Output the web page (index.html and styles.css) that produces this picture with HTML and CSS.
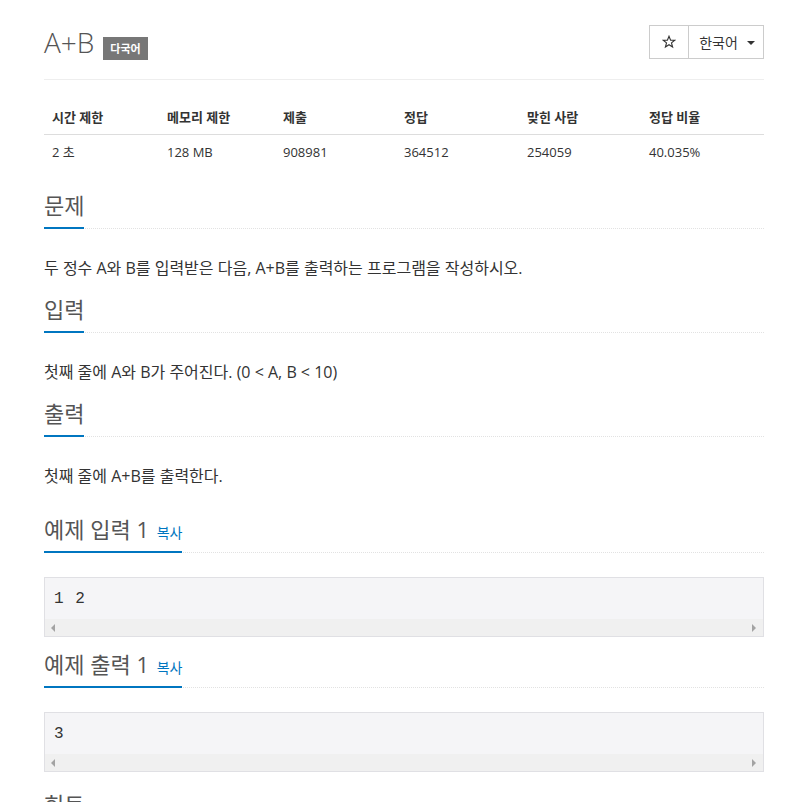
FILE: index.html
```html
<!DOCTYPE html>
<html lang="ko">
<head>
<meta charset="utf-8">
<title>A+B</title>
<link rel="stylesheet" href="styles.css">
</head>
<body>
<div class="container">
  <div class="page-header">
    <h1 class="title">A+B <span class="badge">다국어</span></h1>
    <div class="btn-group">
      <button class="btn btn-star" type="button">
        <svg width="14" height="14" viewBox="0 0 14 14"><path d="M7 1.2 L8.6 5.1 L12.8 5.3 L9.5 7.9 L10.6 12 L7 9.7 L3.4 12 L4.5 7.9 L1.2 5.3 L5.4 5.1 Z" fill="none" stroke="#333" stroke-width="1.1" stroke-linejoin="miter"/></svg>
      </button>
      <button class="btn btn-lang" type="button">한국어 <span class="caret"></span></button>
    </div>
  </div>

  <table class="info">
    <colgroup>
      <col class="c1"><col class="c2"><col class="c3"><col class="c4"><col class="c5"><col class="c6">
    </colgroup>
    <thead>
      <tr><th>시간 제한</th><th>메모리 제한</th><th>제출</th><th>정답</th><th>맞힌 사람</th><th>정답 비율</th></tr>
    </thead>
    <tbody>
      <tr><td>2 초</td><td>128 MB</td><td>908981</td><td>364512</td><td>254059</td><td>40.035%</td></tr>
    </tbody>
  </table>

  <section class="sec">
    <div class="headline"><h2>문제</h2></div>
    <p class="text">두 정수 A와 B를 입력받은 다음, A+B를 출력하는 프로그램을 작성하시오.</p>
  </section>

  <section class="sec">
    <div class="headline"><h2>입력</h2></div>
    <p class="text">첫째 줄에 A와 B가 주어진다. (0 &lt; A, B &lt; 10)</p>
  </section>

  <section class="sec sec-last">
    <div class="headline"><h2>출력</h2></div>
    <p class="text">첫째 줄에 A+B를 출력한다.</p>
  </section>

  <section class="sample">
    <div class="headline"><h2>예제 입력 1 <a class="copy" href="#">복사</a></h2></div>
    <div class="pre-box">
      <pre class="sample-data">1 2</pre>
      <div class="hscroll"><span class="arr arr-l"></span><span class="arr arr-r"></span></div>
    </div>
  </section>

  <section class="sample">
    <div class="headline"><h2>예제 출력 1 <a class="copy" href="#">복사</a></h2></div>
    <div class="pre-box">
      <pre class="sample-data">3</pre>
      <div class="hscroll"><span class="arr arr-l"></span><span class="arr arr-r"></span></div>
    </div>
  </section>

  <section class="sec">
    <div class="headline"><h2>힌트</h2></div>
  </section>
</div>
</body>
</html>
```

FILE: styles.css
```css
html, body {
  margin: 0;
  padding: 0;
  background: #fff;
}
body {
  font-family: "Open Sans", "Noto Sans CJK KR", sans-serif;
  color: #333;
  font-size: 14px;
  line-height: 20px;
}
.container {
  width: 720px;
  margin-left: 44px;
}
.page-header {
  display: flex;
  justify-content: space-between;
  align-items: flex-start;
  padding: 25px 0 19px;
  border-bottom: 1px solid #eee;
}
.title {
  margin: 0;
  font-size: 28px;
  line-height: 34px;
  font-weight: 300;
  color: #555;
  display: flex;
  align-items: flex-start;
}
.badge {
  display: inline-block;
  margin-left: 9px;
  margin-top: 12px;
  height: 23px;
  line-height: 23px;
  padding: 0 7px;
  background: #777;
  color: #fff;
  font-size: 11px;
  font-weight: 700;
  font-family: "Noto Sans CJK KR", sans-serif;
}
.btn-group {
  display: flex;
  height: 34px;
}
.btn {
  background: #fff;
  border: 1px solid #ccc;
  margin: 0;
  height: 34px;
  color: #333;
  font-family: "Noto Sans CJK KR", "Open Sans", sans-serif;
  font-size: 14px;
  display: flex;
  align-items: center;
  justify-content: center;
  padding: 0;
}
.btn-star {
  width: 40px;
}
.btn-star svg {
  display: block;
}
.btn-lang {
  width: 76px;
  margin-left: -1px;
  gap: 9px;
  padding-left: 2px;
}
.caret {
  display: inline-block;
  width: 0;
  height: 0;
  border-top: 4px solid #333;
  border-left: 4px solid transparent;
  border-right: 4px solid transparent;
  margin-top: 1px;
}
.info {
  width: 720px;
  table-layout: fixed;
  border-collapse: collapse;
  margin-top: 20px;
  margin-bottom: 23px;
  font-size: 13px;
}
.c1 { width: 115px; }
.c2 { width: 116px; }
.c3 { width: 121px; }
.c4 { width: 123px; }
.c5 { width: 122px; }
.c6 { width: 123px; }
.info th {
  text-align: left;
  font-weight: 700;
  padding: 8px 8px;
  line-height: 18px;
  border-bottom: 1px solid #ddd;
  color: #333;
}
.info td {
  padding: 7px 8px 8px;
  line-height: 20px;
  color: #333;
}
.headline {
  border-bottom: 1px dotted #e2e2e2;
  display: flex;
}
.headline h2 {
  margin: 0 0 -1px;
  font-size: 22px;
  line-height: 24px;
  height: 24px;
  font-weight: 400;
  color: #555;
  padding-bottom: 10px;
  border-bottom: 2px solid #0076c0;
}
.copy {
  color: #0076c0;
  font-size: 14px;
  line-height: 1;
  text-decoration: none;
  margin-left: 2px;
}
.text {
  margin: 29px 0 0;
  font-size: 16px;
  line-height: 20px;
  color: #333;
}
.sec {
  margin-bottom: 19px;
}
.sec-last {
  margin-bottom: 31px;
}
.sample {
  margin-bottom: 15px;
}
.sample + .sec {
  margin-top: 20px;
}
.pre-box {
  margin-top: 24px;
  border: 1px solid #e0e0e4;
  background: #f5f5f7;
}
.sample-data {
  margin: 0;
  padding: 11px 9px 10px;
  font-family: "Liberation Mono", "DejaVu Sans Mono", monospace;
  font-size: 16px;
  line-height: 20px;
  letter-spacing: 1px;
  color: #333;
}
.hscroll {
  height: 17px;
  background: #f0f0f0;
  display: flex;
  justify-content: space-between;
  align-items: center;
  padding: 0 7px 0 6px;
}
.arr {
  width: 0;
  height: 0;
  border-top: 4px solid transparent;
  border-bottom: 4px solid transparent;
}
.arr-l {
  border-right: 4px solid #a3a3a3;
}
.arr-r {
  border-left: 4px solid #a3a3a3;
}
```
